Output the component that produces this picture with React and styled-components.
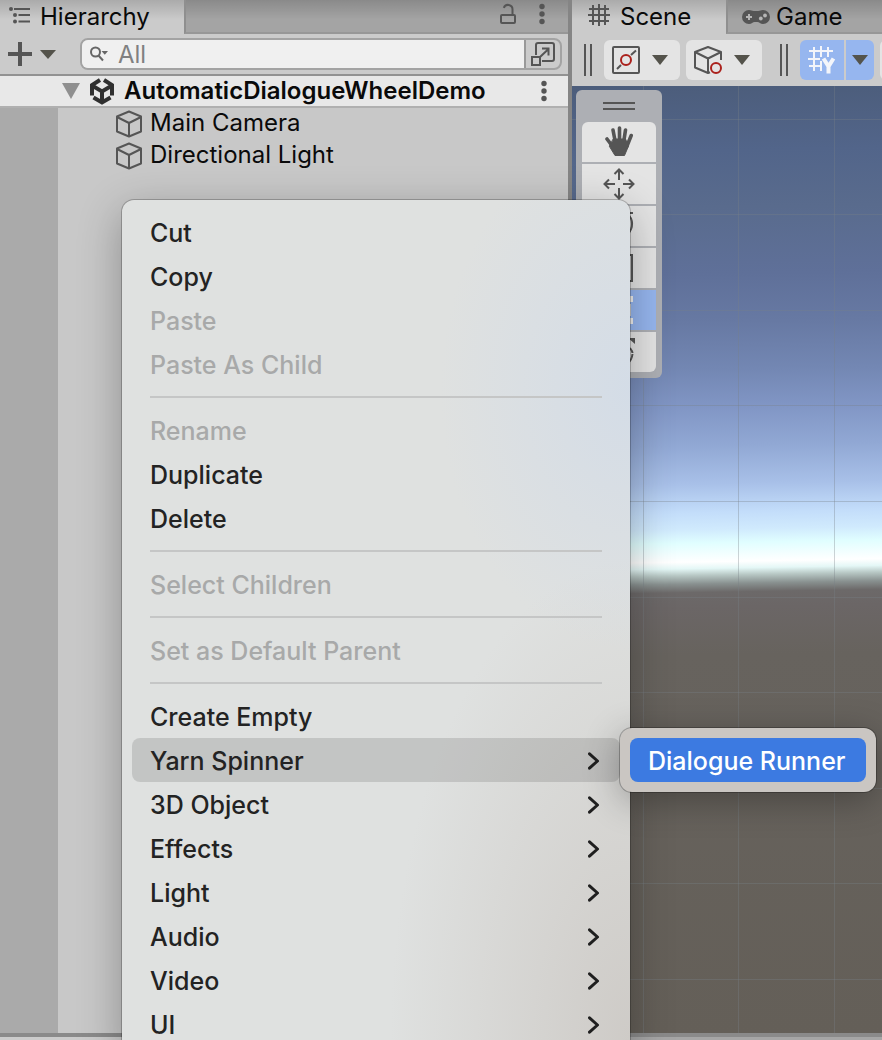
import React from "react";
import styled, { createGlobalStyle, css } from "styled-components";

const ink = "#555555";

const GlobalStyle = createGlobalStyle`
  * { box-sizing: border-box; }
  body {
    margin: 0;
    font-family: Inter, "Liberation Sans", sans-serif;
    font-size: 24px;
    line-height: 32px;
    color: #0a0a0a;
    background: #a5a5a5;
  }
  button, input { font: inherit; color: inherit; }
  button { border: 0; padding: 0; background: none; }
  ul { list-style: none; margin: 0; padding: 0; }
  h1 { margin: 0; font-size: inherit; }
  svg { display: block; flex: none; }
`;

const Editor = styled.div`
  position: relative;
  display: flex;
  flex-direction: column;
  height: 100vh;
  overflow: hidden;
`;

const Docks = styled.div`
  flex: 1;
  min-height: 0;
  display: grid;
  grid-template-columns: minmax(0, 284fr) 4px minmax(0, 155fr);
`;

const Splitter = styled.div`
  background: #858585;
`;

const Panel = styled.section`
  display: flex;
  flex-direction: column;
  min-width: 0;
  overflow: hidden;
  background: #cbcbcb;
`;

const TabBar = styled.div`
  display: flex;
  height: 34px;
  background: linear-gradient(rgba(0, 0, 0, 0.16), rgba(0, 0, 0, 0) 20px), #cbcbcb;
`;

const Tab = styled.button`
  display: flex;
  align-items: flex-start;
  gap: ${(p) => p.$gap}px;
  width: ${(p) => p.$width}px;
  height: 34px;
  padding-left: ${(p) => p.$pad}px;
  white-space: nowrap;
  line-height: 34px;
  svg {
    margin-top: ${(p) => p.$iconTop}px;
  }
  ${(p) =>
    p.$grow &&
    css`
      flex: 1;
      width: auto;
    `}
  ${(p) =>
    p.$idle &&
    css`
      border-left: 2px solid #8f8f8f;
      border-bottom: 2px solid #979797;
      background: rgba(0, 0, 0, 0.19);
    `}
`;

const TabStripEnd = styled.div`
  flex: 1;
  display: flex;
  justify-content: flex-end;
  align-items: flex-start;
  gap: 21px;
  padding: 2px 22px 0 0;
  border-left: 2px solid #8f8f8f;
  border-bottom: 2px solid #979797;
  background: rgba(0, 0, 0, 0.19);
`;

const IconButton = styled.button`
  display: flex;
  align-items: center;
  justify-content: center;
`;

const HierarchyTools = styled.div`
  display: flex;
  align-items: center;
  gap: 24px;
  height: 42px;
  padding: 0 6px 0 8px;
  border-bottom: 2px solid #929292;
`;

const AddButton = styled(IconButton)`
  gap: 8px;
  width: 48px;
  height: 32px;
`;

const SearchBox = styled.div`
  flex: 1;
  min-width: 0;
  display: flex;
  height: 32px;
  border: 2px solid #a3a3a3;
  border-radius: 8px;
  overflow: hidden;
`;

const SearchLabel = styled.label`
  flex: 1;
  min-width: 0;
  display: flex;
  align-items: center;
  gap: 10px;
  padding-left: 8px;
  background: #f0f0f0;
`;

const SearchInput = styled.input`
  flex: 1;
  min-width: 0;
  height: 28px;
  padding: 2px 0 0;
  border: 0;
  outline: 0;
  background: transparent;
  &::placeholder {
    color: #808080;
    opacity: 1;
  }
`;

const PickerButton = styled(IconButton)`
  width: 36px;
  border-left: 2px solid #999999;
`;

const SceneRow = styled.div`
  display: flex;
  align-items: center;
  height: 32px;
  padding: 0 20px 0 62px;
  border-bottom: 2px solid #b0b0b0;
  background: #e8e8e8;
`;

const SceneLabel = styled.h1`
  flex: 1;
  min-width: 0;
  padding-left: 8px;
  font-weight: 600;
  line-height: 30px;
  white-space: nowrap;
`;

const LogoSlot = styled.span`
  display: flex;
  padding-left: 8px;
`;

const TreeArea = styled.div`
  flex: 1;
  display: flex;
  background: #c8c8c8;
`;

const Gutter = styled.div`
  width: 58px;
  background: #aaaaaa;
`;

const Tree = styled.ul`
  flex: 1;
`;

const TreeItem = styled.li`
  display: flex;
  align-items: flex-start;
  gap: 7px;
  height: 32px;
  padding-left: 57px;
  line-height: 30px;
  white-space: nowrap;
  svg {
    margin-top: 2px;
  }
`;

const SceneTools = styled.div`
  display: flex;
  height: 52px;
  padding: 6px 0 6px 12px;
  overflow: hidden;
`;

const Grip = styled.span`
  flex: none;
  width: 8px;
  margin: 4px 12px 4px ${(p) => p.$before || 0}px;
  border: solid ${ink};
  border-width: 0 2px;
`;

const ToolButton = styled(IconButton)`
  flex: none;
  width: ${(p) => p.$width}px;
  height: 40px;
  margin-right: ${(p) => p.$after}px;
  border-radius: ${(p) => p.$corners || "6px"};
  background: ${(p) => (p.$on ? "#96b6ef" : "#e4e4e4")};
`;

const DropButton = styled(ToolButton)`
  justify-content: flex-start;
  gap: 12px;
  padding-left: 8px;
`;

const Viewport = styled.div`
  position: relative;
  flex: 1;
  overflow: hidden;
  background: linear-gradient(
    179deg,
    #4c5d7b 0%,
    #52658a 7%,
    #596b8d 13%,
    #5f7099 20%,
    #6779a3 25%,
    #7387b3 30%,
    #8196c5 34%,
    #91a8d4 38%,
    #a8c0e8 42%,
    #c3ddfa 45%,
    #d0eafd 46.8%,
    #e0feff 48.2%,
    #ffffff 50.2%,
    #e4f7f6 50.9%,
    #b8c8c5 51.6%,
    #899190 52.5%,
    #6c6969 53.4%,
    #6b6666 55%,
    #67635e 60%,
    #645f58 100%
  );
`;

const GridLines = styled.svg`
  position: absolute;
  inset: 0;
  width: 100%;
  height: 100%;
`;

const Palette = styled.div`
  position: absolute;
  left: 4px;
  top: 4px;
  width: 86px;
  padding: 0 6px 6px;
  border-radius: 6px;
  background: #adafb4;
`;

const PaletteGrip = styled.div`
  height: 8px;
  margin: 12px 21px;
  border: solid ${ink};
  border-width: 2px 0;
`;

const PaletteTools = styled.div`
  display: grid;
  gap: 2px;
  border-radius: 6px;
  overflow: hidden;
`;

const PaletteTool = styled(IconButton)`
  height: 40px;
  background: ${(p) => (p.$on ? "#96b6ef" : "#e4e4e4")};
`;

const StatusBar = styled.footer`
  height: 7px;
  border-top: 4px solid #8a8a8a;
  background: linear-gradient(90deg, #cbcbcb 50%, #a6a6a6 50%);
`;

const Menu = styled.ul`
  position: absolute;
  left: 122px;
  top: 200px;
  width: 508px;
  padding: 10px;
  border-radius: 12px;
  background:
    radial-gradient(190px 260px at 100% 190px, rgba(211, 220, 231, 0.95), rgba(211, 220, 231, 0)),
    radial-gradient(240px 480px at 100% 840px, rgba(206, 203, 199, 1), rgba(206, 203, 199, 0)),
    #dfe1e0;
  box-shadow: 0 0 0 1px rgba(0, 0, 0, 0.22), 0 12px 44px rgba(0, 0, 0, 0.3);
  font-size: 25px;
  font-weight: 500;
`;

const MenuItem = styled.li`
  position: relative;
`;

const MenuButton = styled.button`
  display: flex;
  align-items: center;
  justify-content: space-between;
  width: 100%;
  height: 44px;
  padding: 2px 20px 0 18px;
  border-radius: 8px;
  color: #232323;
  text-align: left;
  white-space: nowrap;
  background: ${(p) => (p.$open ? "rgba(0, 0, 0, 0.12)" : "none")};
  &:disabled {
    color: #a8a9a9;
  }
`;

const Separator = styled.li`
  height: 2px;
  margin: 10px 18px;
  background: #c5c6c6;
`;

const Submenu = styled.ul`
  position: absolute;
  left: 100%;
  top: -10px;
  padding: 10px;
  border-radius: 12px;
  background: #cac6c2;
  box-shadow: 0 0 0 1px rgba(0, 0, 0, 0.25), 0 8px 36px rgba(0, 0, 0, 0.3);
`;

const SubmenuButton = styled(MenuButton)`
  width: 236px;
  padding: 2px 18px 0;
  background: #3c7ae1;
  color: #ffffff;
`;

const Caret = ({ w = 16, h = 10, color = "#54534b" }) => (
  <svg width={w} height={h} viewBox="0 0 18 10" preserveAspectRatio="none" aria-hidden="true">
    <path d="M0 0H18L9 10Z" fill={color} />
  </svg>
);

const Kebab = () => (
  <svg width="8" height="24" viewBox="0 0 8 24" fill={ink} aria-hidden="true">
    <circle cx="4" cy="4.500" r="2.700" />
    <circle cx="4" cy="12" r="2.700" />
    <circle cx="4" cy="19.500" r="2.700" />
  </svg>
);

const UnityLogo = () => (
  <svg width="28" height="28" viewBox="0 0 28 28" fill="none" stroke="#303030" strokeWidth="4" aria-hidden="true">
    <path d="M12 3L4 8V18.500M16 3L24 8V18.500M5.500 20.500L14 25.500L22.500 20.500" />
    <path d="M4 8.500L14 14.500L24 8.500M14 14V24" />
  </svg>
);

const HierarchyIcon = () => (
  <svg width="22" height="20" viewBox="0 0 22 20" fill={ink} aria-hidden="true">
    <circle cx="2" cy="3" r="2" />
    <circle cx="6" cy="9" r="2" />
    <circle cx="6" cy="15.500" r="2" />
    <path d="M5 2H21V4H5ZM9.500 8H21V10H9.500ZM9.500 14.500H21V16.500H9.500Z" />
  </svg>
);

const LockIcon = () => (
  <svg width="18" height="24" viewBox="0 0 18 24" fill="none" stroke={ink} strokeWidth="2" aria-hidden="true">
    <rect x="2" y="13" width="14" height="8" rx="1" />
    <path d="M13.500 13V7.500A4.500 4.500 0 0 0 4.800 5.800" />
  </svg>
);

const PlusIcon = () => (
  <svg width="24" height="24" viewBox="0 0 24 24" stroke={ink} strokeWidth="4" aria-hidden="true">
    <path d="M12 0V24M0 12H24" />
  </svg>
);

const SearchIcon = () => (
  <svg width="18" height="16" viewBox="0 0 18 16" fill="none" stroke="#666" strokeWidth="2" aria-hidden="true">
    <circle cx="5.500" cy="6" r="4.500" />
    <path d="M8.500 9.500L13 14.500" />
    <path d="M11.500 5H18L14.800 8.800Z" fill="#666" stroke="none" />
  </svg>
);

const PickerIcon = () => (
  <svg width="26" height="26" viewBox="0 0 26 26" fill="none" stroke={ink} strokeWidth="2" aria-hidden="true">
    <path d="M6 14V4Q6 2 8 2H22Q24 2 24 4V18Q24 20 22 20H12" />
    <rect x="2" y="16" width="8" height="8" />
    <path d="M10 16L18.500 8M12 7.500H18.500V14.500" />
  </svg>
);

const CubeIcon = () => (
  <svg width="28" height="28" viewBox="0 0 28 28" fill="none" stroke={ink} strokeWidth="2" strokeLinejoin="round" aria-hidden="true">
    <path d="M14 1.500L26 6.500V21.500L14 26.500L2 21.500V6.500ZM2 7L14 13L26 7M14 13V26" />
  </svg>
);

const HashIcon = () => (
  <svg width="22" height="22" viewBox="0 0 22 22" stroke={ink} strokeWidth="2" aria-hidden="true">
    <path d="M5 1V21M11 0V22M17 1V21M1 5H21M0 11H22M1 17H21" />
  </svg>
);

const GamepadIcon = () => (
  <svg width="28" height="16" viewBox="0 0 28 16" aria-hidden="true">
    <path d="M7 1C9 1 10 2 11.500 2H16.500C18 2 19 1 21 1A7 7 0 0 1 21 15C18.500 15 17 13 15.500 13H12.500C11 13 9.500 15 7 15A7 7 0 0 1 7 1Z" fill={ink} />
    <path d="M7 5V11M4 8H10" stroke="#b5b5b5" strokeWidth="2" />
    <circle cx="18.800" cy="9.500" r="1.900" fill="#b5b5b5" />
    <circle cx="23" cy="6.500" r="1.900" fill="#b5b5b5" />
  </svg>
);

const PivotIcon = () => (
  <svg width="28" height="28" viewBox="0 0 28 28" fill="none" stroke={ink} strokeWidth="2" aria-hidden="true">
    <rect x="1" y="1" width="26" height="26" rx="1" />
    <path d="M5 23L9 19M19 9L24 4.500" />
    <circle cx="14" cy="14" r="5" stroke="#ab211c" />
  </svg>
);

const LocalCubeIcon = () => (
  <svg width="28" height="28" viewBox="0 0 28 28" fill="none" stroke={ink} strokeWidth="2" strokeLinejoin="round" aria-hidden="true">
    <path d="M27 14V6L14 1L1 6V21.500L14 27V12.500M1 6L14 12.500L27 6M14 27L16 26.200" />
    <circle cx="22" cy="22" r="5" stroke="#ab211c" />
  </svg>
);

const GridAxisIcon = () => (
  <svg width="28" height="28" viewBox="0 0 28 28" fill="none" stroke="#f3f5fa" aria-hidden="true">
    <path d="M6 1V25M13 0V11M13 15V25M20 1V11M1 5H25M0 13H12M1 20H12" strokeWidth="2" />
    <path d="M15.500 12.500L20.500 20.500L25.500 12.500M20.500 20V27.500" strokeWidth="4" />
  </svg>
);

const HandIcon = () => (
  <svg width="28" height="32" viewBox="0 0 28 32" fill={ink} stroke={ink} strokeLinecap="round" aria-hidden="true">
    <path d="M8 4L10.500 17M14.500 2V16M20.500 4L18.500 17M26.200 9.500L22 20M2 13L8 21" strokeWidth="3.600" />
    <path d="M8.500 13H20.500L23.500 20L19.500 29.500H10L4.500 20.500Z" strokeWidth="1" />
  </svg>
);

const MoveIcon = () => (
  <svg width="32" height="32" viewBox="0 0 32 32" fill="none" stroke={ink} strokeWidth="2" aria-hidden="true">
    <path d="M16 12V2M16 20V30M12 16H2M20 16H30" />
    <path d="M11.500 6L16 1.500L20.500 6M11.500 26L16 30.500L20.500 26M6 11.500L1.500 16L6 20.500M26 11.500L30.500 16L26 20.500" />
  </svg>
);

const RotateIcon = () => (
  <svg width="30" height="30" viewBox="0 0 30 30" fill="none" stroke={ink} strokeWidth="2" aria-hidden="true">
    <path d="M23.500 3C29.500 8 29.500 17 24 23M5.500 25C0.500 20 0.500 10 5.500 5M23 2H29M1 26H7" />
  </svg>
);

const ScaleIcon = () => (
  <svg width="30" height="30" viewBox="0 0 30 30" fill="none" stroke={ink} strokeWidth="2" aria-hidden="true">
    <path d="M1 2H28V28H1Z" />
    <path d="M1 18H11V28" />
  </svg>
);

const RectIcon = () => (
  <svg width="30" height="30" viewBox="0 0 30 30" fill="#f0f0f0" aria-hidden="true">
    <path d="M1 1H7V7H1ZM23 1H29V7H23ZM1 23H7V29H1ZM23 23H29V29H23ZM3 9H5V21H3ZM25 9H27V21H25ZM9 3H21V5H9ZM9 25H21V27H9Z" />
    <circle cx="15" cy="15" r="3" />
  </svg>
);

const TransformIcon = () => (
  <svg width="34" height="32" viewBox="0 0 34 32" fill="none" stroke={ink} strokeWidth="2" aria-hidden="true">
    <path d="M28 12C29.500 14 30.500 15.500 30.500 17M30.500 18C30 22 28.500 25 26 27M10 27A13 13 0 0 1 10 4" />
    <path d="M26 2H33V8Z" fill={ink} stroke="none" />
    <path d="M13 12H21V20H13Z" />
  </svg>
);

const Chevron = () => (
  <svg width="12" height="18" viewBox="0 0 12 18" fill="none" stroke="#1f1f1f" strokeWidth="3" strokeLinecap="round" strokeLinejoin="round" aria-hidden="true">
    <path d="M1.500 1.800L9.500 9L1.500 16.200" />
  </svg>
);

const columns = [71, 166, 262, 358, 454, 550, 646];
const rows = [33, 128, 224, 319, 415, 511, 606, 702, 797, 893];

const paletteTools = [
  { name: "View tool", Icon: HandIcon },
  { name: "Move tool", Icon: MoveIcon },
  { name: "Rotate tool", Icon: RotateIcon },
  { name: "Scale tool", Icon: ScaleIcon },
  { name: "Rect tool", Icon: RectIcon, on: true },
  { name: "Transform tool", Icon: TransformIcon },
];

const menu = [
  { label: "Cut" },
  { label: "Copy" },
  { label: "Paste", disabled: true },
  { label: "Paste As Child", disabled: true },
  null,
  { label: "Rename", disabled: true },
  { label: "Duplicate" },
  { label: "Delete" },
  null,
  { label: "Select Children", disabled: true },
  null,
  { label: "Set as Default Parent", disabled: true },
  null,
  { label: "Create Empty" },
  { label: "Yarn Spinner", more: true, children: ["Dialogue Runner"] },
  { label: "3D Object", more: true },
  { label: "Effects", more: true },
  { label: "Light", more: true },
  { label: "Audio", more: true },
  { label: "Video", more: true },
  { label: "UI", more: true },
];

function HierarchyPanel() {
  return (
    <Panel>
      <TabBar>
        <Tab $width={184} $pad={9} $gap={9} $iconTop={6}>
          <HierarchyIcon />
          <span>Hierarchy</span>
        </Tab>
        <TabStripEnd>
          <IconButton aria-label="Lock">
            <LockIcon />
          </IconButton>
          <IconButton aria-label="Panel options">
            <Kebab />
          </IconButton>
        </TabStripEnd>
      </TabBar>
      <HierarchyTools>
        <AddButton aria-label="Create object">
          <PlusIcon />
          <Caret w={16} h={9} />
        </AddButton>
        <SearchBox>
          <SearchLabel>
            <SearchIcon />
            <SearchInput aria-label="Search hierarchy" placeholder="All" />
          </SearchLabel>
          <PickerButton aria-label="Open search window">
            <PickerIcon />
          </PickerButton>
        </SearchBox>
      </HierarchyTools>
      <SceneRow>
        <Caret w={18} h={16} color="#8f8f8f" />
        <LogoSlot>
          <UnityLogo />
        </LogoSlot>
        <SceneLabel>AutomaticDialogueWheelDemo</SceneLabel>
        <IconButton aria-label="Scene options">
          <Kebab />
        </IconButton>
      </SceneRow>
      <TreeArea>
        <Gutter />
        <Tree>
          {["Main Camera", "Directional Light"].map((name) => (
            <TreeItem key={name}>
              <CubeIcon />
              {name}
            </TreeItem>
          ))}
        </Tree>
      </TreeArea>
    </Panel>
  );
}

function ScenePanel() {
  return (
    <Panel>
      <TabBar>
        <Tab $width={154} $pad={16} $gap={10} $iconTop={4}>
          <HashIcon />
          <span>Scene</span>
        </Tab>
        <Tab $idle $grow $pad={14} $gap={6} $iconTop={9}>
          <GamepadIcon />
          <span>Game</span>
        </Tab>
      </TabBar>
      <SceneTools>
        <Grip />
        <DropButton $width={76} $after={6} aria-label="Pivot mode">
          <PivotIcon />
          <Caret />
        </DropButton>
        <DropButton $width={76} $after={0} aria-label="Handle rotation">
          <LocalCubeIcon />
          <Caret />
        </DropButton>
        <Grip $before={18} />
        <ToolButton $on $width={44} $after={2} $corners="6px 0 0 6px" aria-label="Grid">
          <GridAxisIcon />
        </ToolButton>
        <ToolButton $on $width={28} $after={6} $corners="0 6px 6px 0" aria-label="Grid options">
          <Caret />
        </ToolButton>
        <ToolButton $width={44} $after={6} aria-label="Snapping" />
      </SceneTools>
      <Viewport>
        <GridLines aria-hidden="true" stroke="rgb(120,130,135)" strokeOpacity="0.35" shapeRendering="crispEdges">
          {columns.map((x) => (
            <line key={x} x1={x} x2={x} y1="0" y2="100%" />
          ))}
          {rows.map((y) => (
            <line key={y} x1="0" x2="100%" y1={y} y2={y} />
          ))}
        </GridLines>
        <Palette>
          <PaletteGrip />
          <PaletteTools>
            {paletteTools.map(({ name, Icon, on }) => (
              <PaletteTool key={name} $on={on} aria-label={name}>
                <Icon />
              </PaletteTool>
            ))}
          </PaletteTools>
        </Palette>
      </Viewport>
    </Panel>
  );
}

function ContextMenu() {
  return (
    <Menu role="menu">
      {menu.map((item, i) =>
        item ? (
          <MenuItem key={item.label} role="none">
            <MenuButton role="menuitem" disabled={item.disabled} $open={!!item.children}>
              {item.label}
              {item.more && <Chevron />}
            </MenuButton>
            {item.children && (
              <Submenu role="menu">
                {item.children.map((child) => (
                  <li key={child} role="none">
                    <SubmenuButton role="menuitem">{child}</SubmenuButton>
                  </li>
                ))}
              </Submenu>
            )}
          </MenuItem>
        ) : (
          <Separator key={i} role="separator" />
        )
      )}
    </Menu>
  );
}

export default function App() {
  return (
    <>
      <GlobalStyle />
      <Editor>
        <Docks>
          <HierarchyPanel />
          <Splitter />
          <ScenePanel />
        </Docks>
        <StatusBar />
        <ContextMenu />
      </Editor>
    </>
  );
}
